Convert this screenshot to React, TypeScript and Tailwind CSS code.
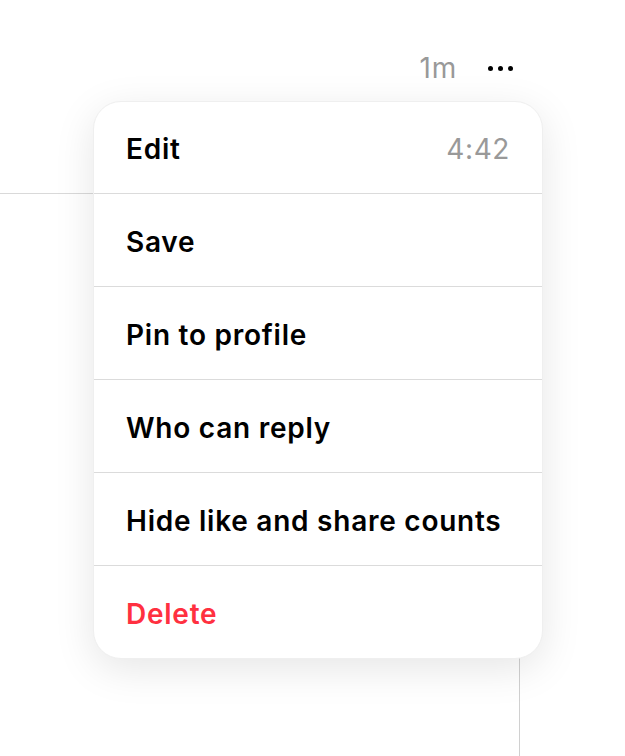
const items = [
  { label: "Edit", meta: "4:42" },
  { label: "Save" },
  { label: "Pin to profile" },
  { label: "Who can reply" },
  { label: "Hide like and share counts" },
  { label: "Delete", danger: true },
];

export default function App() {
  return (
    <div
      className="relative h-[756px] w-[625px] overflow-hidden bg-white"
      style={{ fontFamily: "Inter, 'Noto Sans', sans-serif" }}
    >
      {/* post behind the menu */}
      <div className="flex h-[101px] items-start justify-end pr-[112px] pt-[50px]">
        <span className="text-[28px] leading-[36px] tracking-[0.8px] text-[#999999]">1m</span>
        <button className="ml-[31px] flex h-[36px] items-center gap-[5px]">
          <span className="h-[5px] w-[5px] rounded-full bg-black" />
          <span className="h-[5px] w-[5px] rounded-full bg-black" />
          <span className="h-[5px] w-[5px] rounded-full bg-black" />
        </button>
      </div>
      <div className="mt-[92px] h-px w-[93px] bg-[#d9d9d9]" />
      <div className="absolute left-[519px] top-[650px] h-[106px] w-px bg-[#d0d0d0]" />

      {/* dropdown */}
      <div className="absolute left-[93px] top-[101px] w-[450px] overflow-hidden rounded-[28px] border border-[#efefef] bg-white shadow-[0_10px_40px_rgba(0,0,0,0.1)]">
        {items.map((item, i) => (
          <div
            key={item.label}
            className={`flex items-center justify-between px-[32px] pt-[3px] ${
              i > 0 ? "h-[93px] border-t border-[#dbdbdb]" : "h-[91px]"
            }`}
          >
            <span
              className={`text-[28px] font-semibold tracking-[0.75px] ${
                item.danger ? "text-[#ff3040]" : "text-black"
              }`}
            >
              {item.label}
            </span>
            {item.meta && (
              <span className="text-[28px] tracking-[0.6px] text-[#999999]">{item.meta}</span>
            )}
          </div>
        ))}
      </div>
    </div>
  );
}
